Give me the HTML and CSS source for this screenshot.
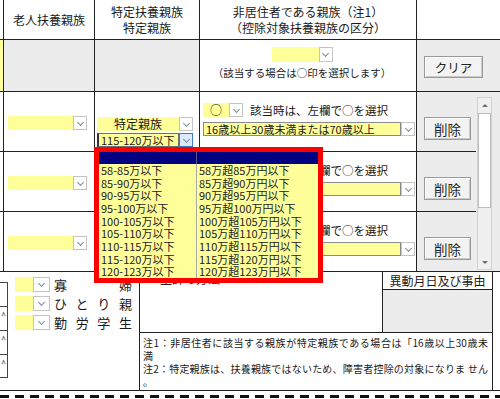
FILE: index.html
```html
<!DOCTYPE html>
<html lang="ja">
<head>
<meta charset="utf-8">
<title>扶養控除等申告書</title>
<link rel="stylesheet" href="styles.css">
</head>
<body>
<div class="tbl">
  <div class="c edge"></div>
  <div class="c hd">老人扶養親族</div>
  <div class="c hd">特定扶養親族<br>特定親族</div>
  <div class="c hd">非居住者である親族（注1）<br>（控除対象扶養親族の区分）</div>
  <div class="c wide"></div>

  <div class="c edge yellow"></div>
  <div class="c gray"></div>
  <div class="c gray"></div>
  <div class="c sel-cell">
    <div class="dd dd-short"><span class="val"></span><span class="arr"></span></div>
    <div class="hint">（該当する場合は○印を選択します）</div>
  </div>
  <div class="c wide gray clear-cell"><button class="btn btn-clear">クリア</button></div>

  <div class="c edge"></div>
  <div class="c old"><div class="dd dd-old"><span class="val"></span><span class="arr"></span></div></div>
  <div class="c spec">
    <div class="dd dd-spec"><span class="val center">特定親族</span><span class="arr"></span></div>
    <div class="dd dd-spec focus"><span class="val small">115-120万以下</span><span class="arr"></span></div>
  </div>
  <div class="c nonres">
    <div class="line1"><div class="dd dd-maru"><span class="val center">○</span><span class="arr"></span></div><span class="note">該当時は、左欄で○を選択</span></div>
    <div class="dd dd-long"><span class="val small">16歳以上30歳未満または70歳以上</span><span class="arr"></span></div>
  </div>
  <div class="c del"><button class="btn btn-del">削除</button></div>
  <div class="scroll-cell">
    <div class="sb">
      <div class="sb-btn up"></div>
      <div class="sb-thumb"></div>
      <div class="sb-track"></div>
      <div class="sb-btn down"></div>
    </div>
  </div>

  <div class="c edge"></div>
  <div class="c old"><div class="dd dd-old"><span class="val"></span><span class="arr"></span></div></div>
  <div class="c spec"></div>
  <div class="c nonres">
    <div class="line1"><div class="dd dd-maru"><span class="val"></span><span class="arr"></span></div><span class="note">該当時は、左欄で○を選択</span></div>
    <div class="dd dd-long"><span class="val"></span><span class="arr"></span></div>
  </div>
  <div class="c del"><button class="btn btn-del">削除</button></div>

  <div class="c edge"></div>
  <div class="c old"><div class="dd dd-old"><span class="val"></span><span class="arr"></span></div></div>
  <div class="c spec"></div>
  <div class="c nonres">
    <div class="line1"><div class="dd dd-maru"><span class="val"></span><span class="arr"></span></div><span class="note">該当時は、左欄で○を選択</span></div>
    <div class="dd dd-long"><span class="val"></span><span class="arr"></span></div>
  </div>
  <div class="c del"><button class="btn btn-del">削除</button></div>
</div>

<div class="bottom">
  <div class="left">
    <div class="strip">
      <div class="sbox"></div>
      <div class="sbox">^</div>
      <div class="sbox">^</div>
      <div class="sbox">^</div>
    </div>
    <div class="checks">
      <div class="chk"><div class="dd dd-mini"><span class="val"></span><span class="arr"></span></div><span class="lbl">寡婦</span></div>
      <div class="chk"><div class="dd dd-mini"><span class="val"></span><span class="arr"></span></div><span class="lbl">ひとり親</span></div>
      <div class="chk"><div class="dd dd-mini"><span class="val"></span><span class="arr"></span></div><span class="lbl">勤労学生</span></div>
    </div>
  </div>
  <div class="right">
    <div class="addr"><span class="addr-h">生計の方法</span></div>
    <div class="ido">
      <div class="ido-h">異動月日及び事由</div>
      <div class="ido-b"></div>
    </div>
    <div class="notes">
      <p class="jl">注1：非居住者に該当する親族が特定親族である場合は「16歳以上30歳未</p>
      <p>満</p>
      <p class="jl">注2：特定親族は、扶養親族ではないため、障害者控除の対象になりま せん</p>
      <p>。</p>
    </div>
  </div>
</div>
<div class="dash"></div>

<div class="popup">
  <div class="pop-head"><span></span><span></span></div>
  <div class="pop-row"><span>58-85万以下</span><span>58万超85万円以下</span></div>
  <div class="pop-row"><span>85-90万以下</span><span>85万超90万円以下</span></div>
  <div class="pop-row"><span>90-95万以下</span><span>90万超95万円以下</span></div>
  <div class="pop-row"><span>95-100万以下</span><span>95万超100万円以下</span></div>
  <div class="pop-row"><span>100-105万以下</span><span>100万超105万円以下</span></div>
  <div class="pop-row"><span>105-110万以下</span><span>105万超110万円以下</span></div>
  <div class="pop-row"><span>110-115万以下</span><span>110万超115万円以下</span></div>
  <div class="pop-row"><span>115-120万以下</span><span>115万超120万円以下</span></div>
  <div class="pop-row"><span>120-123万以下</span><span>120万超123万円以下</span></div>
</div>
</body>
</html>
```

FILE: styles.css
```css
* { box-sizing: border-box; margin: 0; padding: 0; }
html, body { width: 500px; height: 399px; overflow: hidden; background: #fff; }
body {
  position: relative;
  font-family: "Noto Sans CJK JP", "Noto Sans", sans-serif;
  font-size: 12px;
  color: #1a1a1a;
}

/* main table */
.tbl {
  display: grid;
  grid-template-columns: 4px 91px 105px 217px 59px 15px 9px;
  grid-template-rows: 40px 52px 60px 60px 60px;
}
.c { border-right: 1px solid #222; border-bottom: 1px solid #222; }
.wide { grid-column: 5 / 8; border-right: none; }
.hd {
  display: flex; align-items: center; justify-content: center;
  text-align: center; font-size: 12px; line-height: 16px;
}
.yellow { background: #ffff99; }
.gray { background: #ececec; }

/* dropdowns */
.dd { display: flex; height: 14px; }
.dd .val {
  flex: 1; background: #ffff99; font-size: 12px; line-height: 14px;
  white-space: nowrap; padding-left: 2px;
}
.dd .val.center { text-align: center; padding-left: 0; }
.dd .val.small { font-size: 11px; }
.dd .arr {
  width: 14px; background: #fff; border: 1px solid #c4c4c4;
  display: flex; justify-content: center; align-items: flex-start;
}
.dd .arr::after {
  content: ""; width: 4px; height: 4px; margin-top: 3px;
  border-right: 1px solid #7d8ba0; border-bottom: 1px solid #7d8ba0;
  transform: rotate(45deg);
}

.sel-cell { display: flex; flex-direction: column; align-items: center; padding: 7px 12px 0 0; }
.dd-short { width: 61px; height: 15px; }
.hint { margin-top: 5px; font-size: 10.5px; line-height: 12px; white-space: nowrap; }

.clear-cell { padding: 16px 0 0 7px; }
.btn {
  font-family: inherit; color: #222; background: #f3f3f3;
  border: 1px solid #9a9a9a;
  box-shadow: inset 1px 1px 0 #fff, inset -1px -1px 0 #c9c9c9;
}
.btn-clear { width: 59px; height: 22px; font-size: 12.5px; }
.btn-del { width: 47px; height: 23px; font-size: 13.5px; }

.old { padding: 24px 0 0 4px; }
.dd-old { width: 79px; }

.spec { padding: 25px 0 0 2px; display: flex; flex-direction: column; gap: 2px; }
.dd-spec { width: 96px; }
.focus .val { border: 1px solid #707070; border-left: 2px solid #333; line-height: 12px; }
.focus .arr { border-color: #3d7bc0; background: #d8eafc; }

.nonres { padding: 11px 0 0 3px; display: flex; flex-direction: column; gap: 5px; }
.line1 { display: flex; align-items: center; gap: 7px; height: 14px; }
.dd-maru { width: 40px; }
.note { font-size: 11.5px; white-space: nowrap; }
.dd-long { width: 212px; }
.dd-long .val { border: 1px solid #8a8a8a; line-height: 12px; }

.del { border-right: none; background: #ececec; padding: 25px 0 0 7px; }

.scroll-cell {
  grid-column: 6 / 8; grid-row: 3 / 6;
  background: #ececec; border-bottom: 1px solid #222;
  padding: 5px 0 0 1px;
}
.sb {
  width: 15px; height: 173px; background: #f0f0f0; border: 1px solid #d2d2d2;
  display: flex; flex-direction: column;
}
.sb-btn { height: 14px; display: flex; justify-content: center; align-items: center; background: #f0f0f0; }
.sb-btn.up::after {
  content: ""; border-left: 3px solid transparent; border-right: 3px solid transparent;
  border-bottom: 3px solid #707070;
}
.sb-btn.down::after {
  content: ""; border-left: 3px solid transparent; border-right: 3px solid transparent;
  border-top: 3px solid #707070;
}
.sb-thumb { height: 95px; margin: 1px 0; background: #fff; border: 1px solid #bdbdbd; }
.sb-track { flex: 1; }

/* bottom section */
.bottom { display: flex; height: 119px; border-bottom: 1px solid #222; }
.left { width: 139px; display: flex; }
.strip { width: 8px; padding-top: 10px; display: flex; flex-direction: column; }
.sbox {
  height: 24px; border: 1px solid #444; border-left: none; border-bottom: none;
  font-size: 9px; line-height: 18px; color: #333; padding-left: 1px;
}
.sbox:last-child { border-bottom: 1px solid #444; }
.checks { padding: 5px 0 0 7px; display: flex; flex-direction: column; gap: 4px; }
.chk { display: flex; align-items: center; gap: 4px; height: 15px; }
.dd-mini { width: 35px; height: 15px; }
.dd-mini .arr { width: 17px; }
.lbl { width: 78px; font-size: 13px; line-height: 15px; text-align: justify; text-align-last: justify; }

.right {
  width: 354px; border-left: 1px solid #222; border-right: 1px solid #222;
  display: grid; grid-template-columns: 243px 109px; grid-template-rows: 61px 1fr;
}
.addr { border-right: 1px solid #222; border-bottom: 1px solid #222; padding: 0 0 0 20px; line-height: 14px; }
.addr-h { font-size: 12px; }
.ido { border-bottom: 1px solid #222; display: flex; flex-direction: column; }
.ido-h { height: 18px; border-bottom: 1px solid #222; text-align: center; font-size: 12px; line-height: 17px; }
.ido-b { flex: 1; background: #ececec; }
.notes { grid-column: 1 / 3; padding: 3px 4px 0 3px; font-size: 10px; line-height: 13px; }
.notes p { white-space: nowrap; }
.notes .jl { text-align: justify; text-align-last: justify; }

.dash {
  margin-top: 4px; height: 3px;
  background: repeating-linear-gradient(90deg, #111 0 9px, transparent 9px 15px);
}

/* open dropdown list overlay */
.popup {
  position: absolute; left: 94px; top: 147px; width: 229px; height: 136px;
  border: 5px solid #f00; background: #ffff99;
}
.pop-head { display: grid; grid-template-columns: 98px 1fr; height: 12px; background: #000080; }
.pop-head span:first-child { border-right: 1px solid #5a5a8a; }
.pop-row {
  display: grid; grid-template-columns: 98px 1fr;
  height: 12.67px; line-height: 12.67px; font-size: 11px; color: #222; white-space: nowrap;
}
.pop-row span:first-child { border-right: 1px solid #a8a8a8; padding-left: 2px; }
.pop-row span:last-child { padding-left: 2px; }
```
